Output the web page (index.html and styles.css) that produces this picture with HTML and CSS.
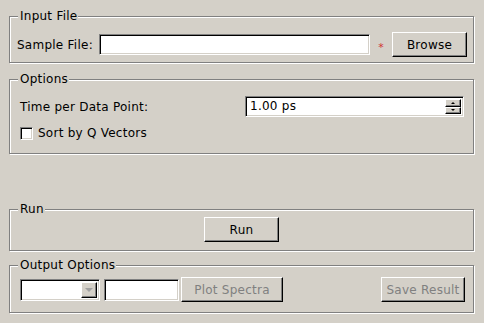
FILE: index.html
```html
<!DOCTYPE html>
<html>
<head>
<meta charset="utf-8">
<link rel="stylesheet" href="styles.css">
</head>
<body>
<div class="window">
  <div class="group g-input">
    <span class="group-title">Input File</span>
    <div class="row-input">
      <label class="lbl-sample">Sample File:</label>
      <div class="field field-sample"></div>
      <span class="req">*</span>
      <div class="btn btn-browse">Browse</div>
    </div>
  </div>

  <div class="group g-options">
    <span class="group-title">Options</span>
    <div class="row-time">
      <label class="lbl-time">Time per Data Point:</label>
      <div class="field spin">
        <span class="spin-text">1.00 ps</span>
        <div class="spin-btns">
          <div class="sbtn"><span class="tri-up"></span></div>
          <div class="sbtn"><span class="tri-down"></span></div>
        </div>
      </div>
    </div>
    <div class="row-check">
      <span class="checkbox"></span>
      <span class="check-label">Sort by Q Vectors</span>
    </div>
  </div>

  <div class="group g-run">
    <span class="group-title">Run</span>
    <div class="row-run">
      <div class="btn btn-run">Run</div>
    </div>
  </div>

  <div class="group g-output">
    <span class="group-title">Output Options</span>
    <div class="row-output">
      <div class="field combo">
        <div class="combo-btn"><span class="tri-down gray"></span></div>
      </div>
      <div class="field field-out"></div>
      <div class="btn btn-plot disabled">Plot Spectra</div>
      <div class="fill"></div>
      <div class="btn btn-save disabled">Save Result</div>
    </div>
  </div>
</div>
</body>
</html>
```

FILE: styles.css
```css
html, body {
  margin: 0;
  padding: 0;
}
body {
  width: 484px;
  height: 323px;
  background: #d4d0c8;
  font-family: "DejaVu Sans", sans-serif;
  font-size: 12px;
  letter-spacing: 0.25px;
  color: #000;
  overflow: hidden;
}
.window {
  display: flex;
  flex-direction: column;
  padding: 0 10px 0 9px;
}
.group {
  position: relative;
  box-sizing: border-box;
  border: 1px solid #808080;
  box-shadow: inset 1px 1px 0 #fff, 1px 1px 0 #fff;
}
.group-title {
  position: absolute;
  top: -8px;
  left: 8px;
  padding: 0 1px 0 2px;
  line-height: 14px;
  background: #d4d0c8;
  white-space: nowrap;
}
.g-input { margin-top: 16px; height: 47px; }
.g-options { margin-top: 16px; height: 75px; }
.g-run { margin-top: 55px; height: 42px; }
.g-output { margin-top: 14px; height: 48px; }

.field {
  box-sizing: border-box;
  background: #fff;
  border: 1px solid;
  border-color: #808080 #fff #fff #808080;
  box-shadow: inset 1px 1px 0 #000, inset -1px -1px 0 #d4d0c8;
}
.btn {
  box-sizing: border-box;
  height: 25px;
  border: 1px solid;
  border-color: #fff #000 #000 #fff;
  box-shadow: inset -1px -1px 0 #808080;
  display: flex;
  align-items: center;
  justify-content: center;
  white-space: nowrap;
}
.btn.disabled {
  color: #808080;
}

.row-input {
  display: flex;
  align-items: center;
  padding: 15px 6px 0 7px;
}
.lbl-sample { flex: 1; white-space: nowrap; }
.field-sample { width: 271px; height: 21px; }
.req {
  width: 22px;
  text-align: center;
  color: #d03030;
  font-size: 11px;
  line-height: 11px;
  margin-top: 5px;
}
.btn-browse { width: 75px; }

.row-time {
  display: flex;
  align-items: center;
  padding: 16px 9px 0 10px;
}
.lbl-time { flex: 1; white-space: nowrap; }
.spin {
  width: 219px;
  height: 21px;
  display: flex;
  align-items: center;
  padding: 2px 2px 2px 4px;
}
.spin-text { flex: 1; line-height: 15px; }
.spin-btns {
  width: 16px;
  height: 100%;
  display: flex;
  flex-direction: column;
}
.sbtn {
  flex: 1;
  box-sizing: border-box;
  background: #d4d0c8;
  border: 1px solid;
  border-color: #fff #000 #000 #fff;
  box-shadow: inset -1px -1px 0 #808080;
  display: flex;
  align-items: center;
  justify-content: center;
}
.tri-up {
  width: 0; height: 0;
  border-left: 2px solid transparent;
  border-right: 2px solid transparent;
  border-bottom: 2px solid #000;
}
.tri-down {
  width: 0; height: 0;
  border-left: 2px solid transparent;
  border-right: 2px solid transparent;
  border-top: 2px solid #000;
}
.tri-down.gray {
  border-left-width: 4px;
  border-right-width: 4px;
  border-top: 4px solid #a0a0a0;
}

.row-check {
  display: flex;
  align-items: center;
  height: 13px;
  margin-top: 10px;
  padding-left: 10px;
}
.checkbox {
  box-sizing: border-box;
  width: 13px;
  height: 13px;
  background: #fff;
  border: 1px solid;
  border-color: #808080 #fff #fff #808080;
  box-shadow: inset 1px 1px 0 #000, inset -1px -1px 0 #d4d0c8;
}
.check-label { margin-left: 5px; line-height: 13px; }

.row-run {
  display: flex;
  justify-content: center;
  padding-top: 7px;
}
.btn-run { width: 75px; }

.row-output {
  display: flex;
  align-items: center;
  padding: 11px 8px 0 10px;
}
.combo {
  width: 80px;
  height: 22px;
  display: flex;
  justify-content: flex-end;
  padding: 2px;
}
.combo-btn {
  box-sizing: border-box;
  width: 16px;
  height: 100%;
  background: #d4d0c8;
  border: 1px solid;
  border-color: #fff #000 #000 #fff;
  box-shadow: inset -1px -1px 0 #808080;
  display: flex;
  align-items: center;
  justify-content: center;
}
.field-out { width: 75px; height: 22px; margin-left: 4px; }
.btn-plot { width: 102px; margin-left: 2px; }
.fill { flex: 1; }
.btn-save { width: 84px; }
```
